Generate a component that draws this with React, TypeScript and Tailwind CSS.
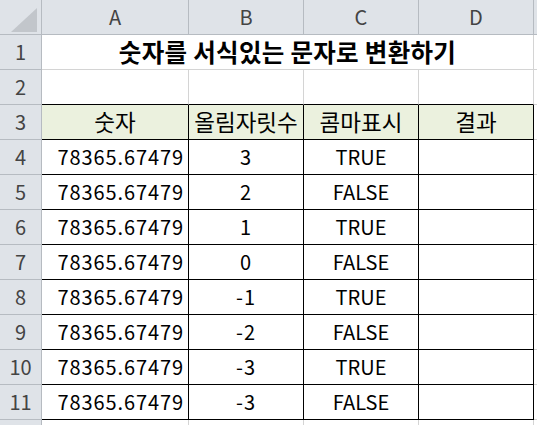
import React from 'react';

const font = { fontFamily: '"Noto Sans CJK KR", "Noto Sans", sans-serif' };

const cols = ['A', 'B', 'C', 'D'];
const widths = ['w-[147px]', 'w-[115px]', 'w-[115px]', 'w-[115px]'];

const data = [
  ['78365.67479', '3', 'TRUE'],
  ['78365.67479', '2', 'FALSE'],
  ['78365.67479', '1', 'TRUE'],
  ['78365.67479', '0', 'FALSE'],
  ['78365.67479', '-1', 'TRUE'],
  ['78365.67479', '-2', 'FALSE'],
  ['78365.67479', '-3', 'TRUE'],
  ['78365.67479', '-3', 'FALSE'],
];

const RowHead = ({ n }: { n?: number }) => (
  <div className="w-[42px] shrink-0 h-full flex items-center justify-center bg-[#dfe3e8] border-r border-b border-[#b6bbc1] text-[20px] text-[#444]">
    {n}
  </div>
);

const App = () => {
  return (
    <div className="w-[537px] h-[425px] overflow-hidden bg-white text-[20px] text-black" style={font}>
      {/* 열 머리글 */}
      <div className="flex h-[35px]">
        <div className="w-[42px] shrink-0 h-full relative bg-[#dfe3e8] border-r border-b border-[#b6bbc1]">
          <svg className="absolute left-[11px] top-[8px]" width="26" height="24" viewBox="0 0 26 24">
            <polygon points="26,0 26,24 0,24" fill="#c2c6cb" />
          </svg>
        </div>
        {cols.map((c, i) => (
          <div key={c} className={`${widths[i]} shrink-0 h-full flex items-center justify-center bg-[#dfe3e8] border-r border-b border-[#b6bbc1] text-[#444]`}>
            {c}
          </div>
        ))}
        <div className="flex-1 h-full bg-[#dfe3e8] border-b border-[#b6bbc1]" />
      </div>

      {/* 1행: 제목 */}
      <div className="flex h-[35px]">
        <RowHead n={1} />
        <div className="w-[492px] shrink-0 h-full flex items-center justify-center border-r border-b border-[#d4d4d4] font-bold text-[24.5px] tracking-[0.3px]">
          숫자를 서식있는 문자로 변환하기
        </div>
        <div className="flex-1 h-full border-b border-[#d4d4d4]" />
      </div>

      {/* 2행 */}
      <div className="flex h-[35px]">
        <RowHead n={2} />
        {widths.map((w, i) => (
          <div key={i} className={`${w} shrink-0 h-full border-r border-[#d4d4d4] border-b-black border-b`} />
        ))}
        <div className="flex-1 h-full border-b border-[#d4d4d4]" />
      </div>

      {/* 3행: 머리글 */}
      <div className="flex h-[35px]">
        <RowHead n={3} />
        {['숫자', '올림자릿수', '콤마표시', '결과'].map((t, i) => (
          <div key={t} className={`${widths[i]} shrink-0 h-full flex items-center justify-center bg-[#ebf1de] border-r border-b border-black text-[22.5px]`}>
            {t}
          </div>
        ))}
        <div className="flex-1 h-full border-b border-[#d4d4d4]" />
      </div>

      {data.map((r, idx) => (
        <div key={idx} className="flex h-[35px]">
          <RowHead n={idx + 4} />
          <div className={`${widths[0]} shrink-0 h-full flex items-center justify-end pr-[4px] border-r border-b border-black tracking-[0.9px]`}>
            {r[0]}
          </div>
          <div className={`${widths[1]} shrink-0 h-full flex items-center justify-center border-r border-b border-black tracking-[0.9px]`}>
            {r[1]}
          </div>
          <div className={`${widths[2]} shrink-0 h-full flex items-center justify-center border-r border-b border-black`}>
            {r[2]}
          </div>
          <div className={`${widths[3]} shrink-0 h-full border-r border-b border-black`} />
          <div className="flex-1 h-full border-b border-[#d4d4d4]" />
        </div>
      ))}

      <div className="flex h-[35px]">
        <RowHead />
        {widths.map((w, i) => (
          <div key={i} className={`${w} shrink-0 h-full border-r border-b border-[#d4d4d4]`} />
        ))}
      </div>
    </div>
  );
};

export default App;
